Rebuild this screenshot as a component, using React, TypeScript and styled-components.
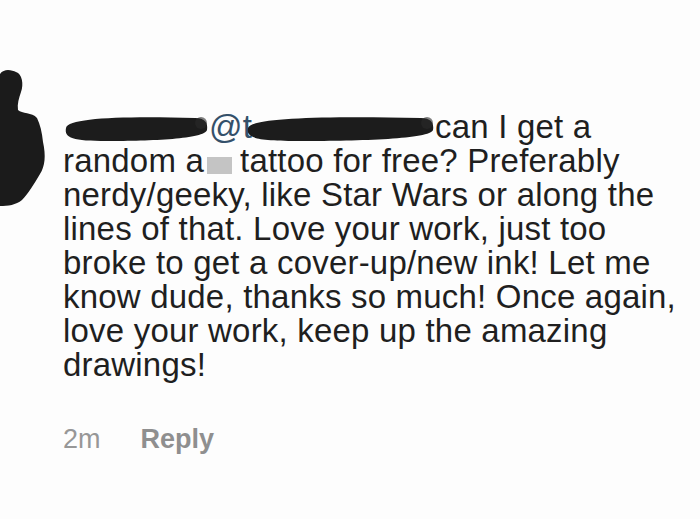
import React from 'react';
import styled, { createGlobalStyle } from 'styled-components';

const GlobalStyle = createGlobalStyle`
  body {
    margin: 0;
    background: #ffffff;
    font-family: "Liberation Sans", Arial, sans-serif;
  }
`;

const Page = styled.div`
  width: 700px;
  height: 519px;
  background: #fdfdfd;
  display: flex;
  padding-top: 62px;
  box-sizing: border-box;
  overflow: hidden;
`;

const AvatarCol = styled.div`
  width: 63px;
  flex-shrink: 0;
`;

const Body = styled.div`
  display: flex;
  flex-direction: column;
`;

const Comment = styled.div`
  margin-top: 48px;
  font-size: 33px;
  line-height: 34px;
  color: #1f1f1f;
  letter-spacing: 0.2px;
`;

const Line = styled.div`
  display: flex;
  align-items: center;
  white-space: pre;
  height: 34px;
`;

const Censor = styled.span`
  display: inline-block;
  width: 25px;
  height: 17px;
  background: #c4c4c4;
  margin: 8px 8px 0 3px;
`;

const Mention = styled.span`
  color: #34506a;
`;

const Meta = styled.div`
  display: flex;
  gap: 40px;
  margin-top: 42px;
  font-size: 27px;
  line-height: 31px;
  color: #979797;
`;

const ReplyLink = styled.span`
  font-weight: bold;
  color: #8f8f8f;
`;

const Scribble = ({ width, overlap = 0 }: { width: number; overlap?: number }) => (
  <svg
    width={width}
    height={30}
    viewBox={`0 0 ${width} 30`}
    style={{ marginTop: 2, marginLeft: -overlap, flexShrink: 0 }}
  >
    <path
      d={`M3 15 C5 5 ${width * 0.4} 3 ${width - 14} 5 C${width - 3} 5 ${width - 1} 11 ${width - 2} 17 C${width - 4} 26 ${width * 0.6} 28 ${width * 0.3} 28 C10 28 1 25 3 15 Z`}
      fill="#1c1c1c"
    />
    <circle cx={width - 8} cy={10} r={6} fill="#2a2a2a" opacity={0.6} />
  </svg>
);

// scribbled-out avatar on the left edge
const AvatarBlob = () => (
  <svg width="50" height="150" viewBox="0 0 50 150">
    <path
      d="M0 12 C4 6 12 8 16 10 C22 12 24 22 21 30 C19 36 17 42 18 48 C22 52 32 50 37 56 C40 62 42 70 43 80 C46 94 45 104 40 112 C34 122 28 132 22 138 C16 143 8 144 0 144 Z"
      fill="#1b1b1b"
    />
  </svg>
);

const lines = [
  'nerdy/geeky, like Star Wars or along the',
  'lines of that. Love your work, just too',
  'broke to get a cover-up/new ink! Let me',
  'know dude, thanks so much! Once again,',
  'love your work, keep up the amazing',
  'drawings!',
];

export default function App() {
  return (
    <>
      <GlobalStyle />
      <Page>
        <AvatarCol>
          <AvatarBlob />
        </AvatarCol>
        <Body>
          <Comment>
            <Line>
              <Scribble width={146} />
              <Mention>@t</Mention>
              <Scribble width={190} overlap={7} />
              {'can I get a'}
            </Line>
            <Line>
              {'random a'}
              <Censor />
              {'tattoo for free? Preferably'}
            </Line>
            {lines.map((l, i) => (
              <Line key={i}>{l}</Line>
            ))}
          </Comment>
          <Meta>
            <span>2m</span>
            <ReplyLink>Reply</ReplyLink>
          </Meta>
        </Body>
      </Page>
    </>
  );
}
